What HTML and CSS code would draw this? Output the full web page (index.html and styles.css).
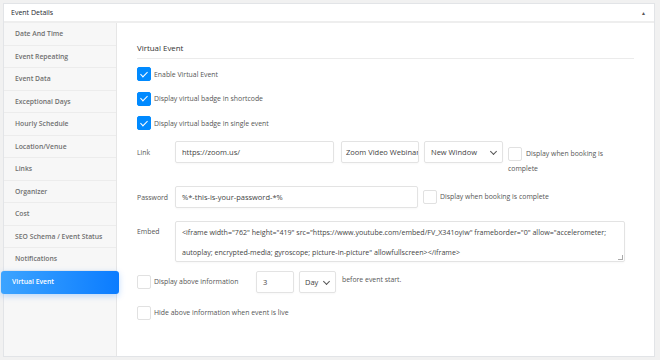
FILE: index.html
```html
<!DOCTYPE html>
<html lang="en">
<head>
    <meta charset="UTF-8">
    <title>Event Details</title>
    <link rel="stylesheet" href="styles.css">
</head>
<body>
    <div class="postbox">
        <div class="postbox-head">
            <span>Event Details</span>
            <span class="toggle">&#9650;</span>
        </div>
        <div class="postbox-body">
            <ul class="tabs">
                <li>Date And Time</li>
                <li>Event Repeating</li>
                <li>Event Data</li>
                <li>Exceptional Days</li>
                <li>Hourly Schedule</li>
                <li>Location/Venue</li>
                <li>Links</li>
                <li>Organizer</li>
                <li>Cost</li>
                <li>SEO Schema / Event Status</li>
                <li>Notifications</li>
                <li class="active">Virtual Event</li>
            </ul>
            <div class="content">
                <h4 class="title">Virtual Event</h4>

                <label class="check-row"><span class="box checked"></span>Enable Virtual Event</label>
                <label class="check-row"><span class="box checked"></span>Display virtual badge in shortcode</label>
                <label class="check-row"><span class="box checked"></span>Display virtual badge in single event</label>

                <div class="field link-row">
                    <span class="field-label">Link</span>
                    <div class="input url">https://zoom.us/</div>
                    <div class="input name">Zoom Video Webinar</div>
                    <div class="input select win">New Window<span class="caret"></span></div>
                    <div class="side-check">
                        <span class="box"></span>Display when booking is
                        <div class="wrap">complete</div>
                    </div>
                </div>

                <div class="field pass-row">
                    <span class="field-label">Password</span>
                    <div class="input pass">%*-this-is-your-password-*%</div>
                    <label class="inline-check"><span class="box"></span>Display when booking is complete</label>
                </div>

                <div class="field embed-row">
                    <span class="field-label">Embed</span>
                    <div class="input textarea">&lt;iframe width="762" height="419" src="https://www.youtube.com/embed/FV_X341oyiw" frameborder="0" allow="accelerometer; autoplay; encrypted-media; gyroscope; picture-in-picture" allowfullscreen&gt;&lt;/iframe&gt;<span class="grip"></span></div>
                </div>

                <div class="above-row">
                    <label class="inline-check first"><span class="box"></span>Display above information</label>
                    <div class="input num">3</div>
                    <div class="input select day">Day<span class="caret"></span></div>
                    <span class="after">before event start.</span>
                </div>

                <label class="check-row last"><span class="box"></span>Hide above information when event is live</label>
            </div>
        </div>
    </div>
</body>
</html>
```

FILE: styles.css
```css
body { margin: 0; background: #f1f1f1; font-family: "Open Sans", Arial, sans-serif; color: #444; }
.postbox { margin: 3px 5px 3px 3px; height: 354px; background: #fff; border: 1px solid #e2e4e7; box-sizing: border-box; display: flex; flex-direction: column; }
.postbox-head { height: 17px; border-bottom: 2px solid #eeeeee; display: flex; align-items: center; justify-content: space-between; padding: 0 8px 0 7px; font-size: 7px; color: #23282d; }
.toggle { font-size: 5px; color: #555; }
.postbox-body { flex: 1; display: flex; }

.tabs { list-style: none; margin: 0; padding: 0; width: 112px; background: #f7f7f7; border-right: 1px solid #e6e6e6; }
.tabs li { height: 21.55px; line-height: 21.55px; border-bottom: 1px solid #ececec; padding-left: 11px; font-size: 6.8px; font-weight: 600; color: #707070; }
.tabs li.active { margin: 0 -3px 0 -3px; padding-left: 11px; color: #fff; border-radius: 3px; border-bottom: 0; height: 22.55px; line-height: 22.55px; background: linear-gradient(90deg, #3da4ff, #0b7cff); box-shadow: 0 2px 6px rgba(0, 120, 255, 0.25); }

.content { flex: 1; padding: 0 20px 0 20px; font-size: 6.9px; color: #555; }
.title { margin: 20px 0 8px; padding-bottom: 5px; border-bottom: 1px solid #ebebeb; font-size: 7.9px; font-weight: 500; color: #333; }

.box { display: inline-block; width: 12px; height: 12px; border: 1px solid #e1e1e1; border-radius: 2px; background: #fff; margin-right: 3px; flex-shrink: 0; position: relative; box-sizing: content-box; }
.box.checked { background: #008aff; border-color: #008aff; }
.box.checked::after { content: ""; position: absolute; left: 4px; top: 1.5px; width: 3px; height: 6px; border: solid #fff; border-width: 0 1.3px 1.3px 0; transform: rotate(45deg); }

.check-row { display: flex; align-items: center; height: 14px; margin-bottom: 10.5px; }

.field { display: flex; align-items: flex-start; }
.field-label { width: 38px; flex-shrink: 0; padding-top: 7px; }
.input { box-sizing: border-box; height: 22px; border: 1px solid #e3e3e3; border-radius: 2px; padding: 0 6px; line-height: 20px; font-size: 7.5px; color: #444; white-space: nowrap; overflow: hidden; box-shadow: 0 1px 2px rgba(0,0,0,0.03); }
.select { position: relative; padding-right: 16px; }
.caret { position: absolute; right: 6px; top: 7px; width: 4px; height: 4px; border: solid #555; border-width: 0 1.2px 1.2px 0; transform: rotate(45deg); }

.link-row { margin-top: 0; height: 45px; }
.url { width: 159px; }
.name { width: 78px; margin-left: 7px; padding: 0 4px; }
.win { width: 79px; margin-left: 5px; }
.side-check { margin-left: 5px; padding-top: 6px; display: block; }
.side-check .box { vertical-align: middle; margin-right: 4px; }
.side-check .wrap { margin-top: 3px; }

.pass-row { height: 35px; }
.pass { width: 243px; }
.inline-check { display: flex; align-items: center; margin-left: 5px; margin-top: 4px; }
.inline-check .box { margin-right: 3px; }

.embed-row { height: 49px; }
.embed-row .field-label { padding-top: 6px; }
.textarea { width: 450px; height: 41px; white-space: normal; line-height: 20px; padding: 0 3px 0 6px; font-size: 7.1px; position: relative; }
.grip { position: absolute; right: 1px; bottom: 1px; width: 4px; height: 4px; border-right: 1px solid #aaa; border-bottom: 1px solid #aaa; }

.above-row { display: flex; align-items: center; height: 22px; margin-top: 1px; margin-bottom: 13px; }
.above-row .inline-check.first { margin: 0; width: 119px; }
.num { width: 38px; }
.day { width: 37px; margin-left: 5px; padding-left: 5px; }
.after { margin-left: 6px; margin-top: -4px; }
```
